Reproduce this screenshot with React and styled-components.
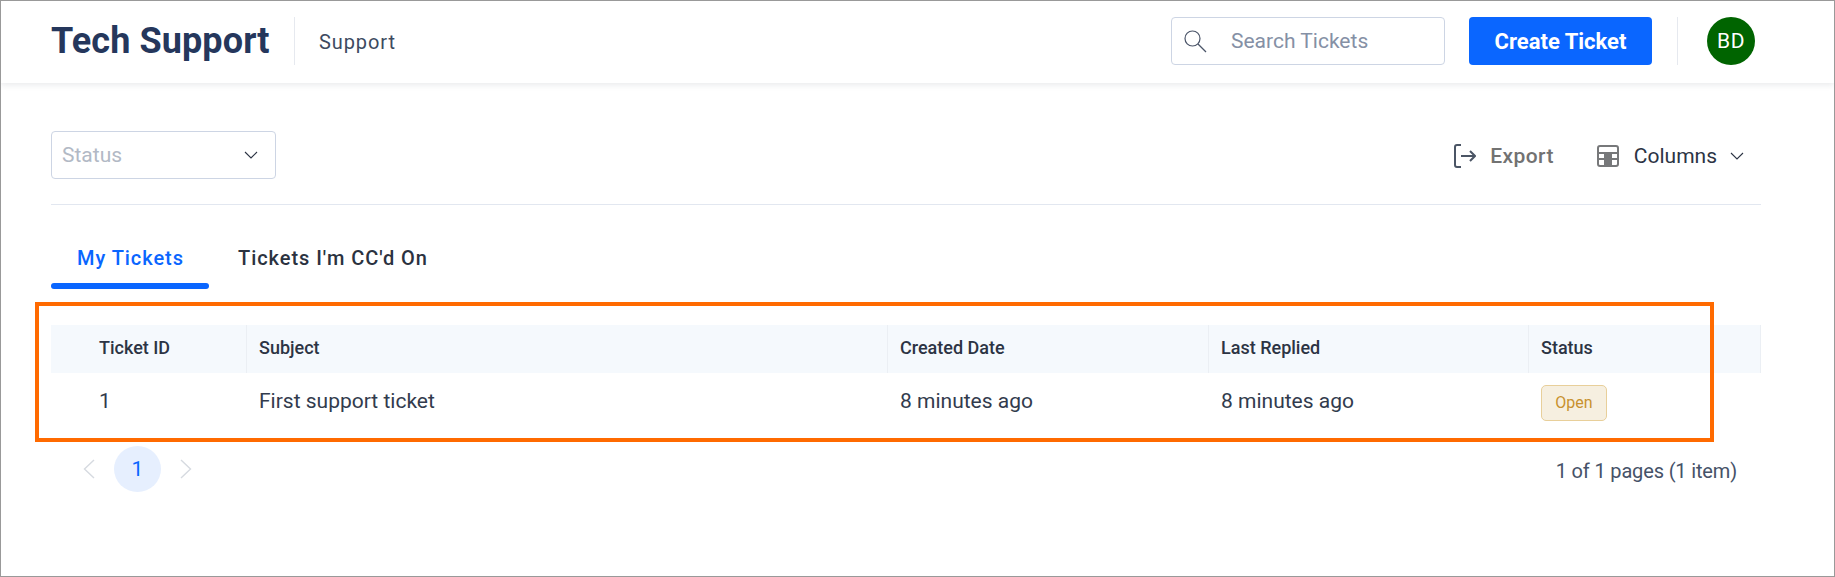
import { createGlobalStyle } from "styled-components";
import styled from "styled-components";

const GlobalStyle = createGlobalStyle`
    html, body {
        margin: 0;
        padding: 0;
        background: #fff;
    }
    * {
        box-sizing: border-box;
    }
`;

const columns = [
    { name: "Ticket ID", width: 196, first: true },
    { name: "Subject", width: 641 },
    { name: "Created Date", width: 321 },
    { name: "Last Replied", width: 320 },
    { name: "Status", width: 232 },
];

const SearchIcon = () => (
    <svg width="24" height="24" viewBox="0 0 24 24" fill="none" stroke="#4a5468" strokeWidth="1.2">
        <circle cx="9.5" cy="9.5" r="7.5" />
        <path d="M15 15l8 8" />
    </svg>
);

const ChevronDown = () => (
    <svg width="14" height="14" viewBox="0 0 14 14" fill="none" stroke="#2c3444" strokeWidth="1.1">
        <path d="M1 4l6 6 6-6" />
    </svg>
);

const PagerArrow = ({ dir }) => (
    <svg width="12" height="20" viewBox="0 0 12 20" fill="none" stroke="#d6dae0" strokeWidth="1.4">
        {dir === "left" ? <path d="M11 1L1.5 10 11 19" /> : <path d="M1 1l9.5 9L1 19" />}
    </svg>
);

const ExportIcon = () => (
    <svg width="22" height="24" viewBox="0 0 22 24" fill="none" stroke="#4b5565" strokeWidth="2">
        <path d="M7 1H3A2 2 0 0 0 1 3v18a2 2 0 0 0 2 2h4" />
        <path d="M7 12h14M16 7l5 5-5 5" />
    </svg>
);

const ColumnsIcon = () => (
    <svg width="22" height="22" viewBox="0 0 22 22">
        <rect x="1" y="1" width="20" height="20" rx="2" fill="#fff" stroke="#77787a" strokeWidth="2" />
        <rect x="1" y="7" width="20" height="2" fill="#77787a" />
        <rect x="7" y="7" width="8" height="14" fill="#77787a" />
        <rect x="1" y="13" width="20" height="2" fill="#77787a" />
    </svg>
);

const App = () => {
    return (
        <Page>
            <GlobalStyle />
            <Header>
                <Title>Tech Support</Title>
                <Crumb>Support</Crumb>
                <HeaderRight>
                    <SearchBox>
                        <SearchIcon />
                        <SearchText>Search Tickets</SearchText>
                    </SearchBox>
                    <CreateButton>Create Ticket</CreateButton>
                    <HeaderDivider />
                    <Avatar>BD</Avatar>
                </HeaderRight>
            </Header>
            <Content>
                <Toolbar>
                    <Select>
                        <span>Status</span>
                        <ChevronDown />
                    </Select>
                    <Actions>
                        <Action>
                            <ExportIcon />
                            <ExportLabel>Export</ExportLabel>
                        </Action>
                        <Action>
                            <ColumnsIcon />
                            <ColumnsLabel>Columns</ColumnsLabel>
                            <ChevronDown />
                        </Action>
                    </Actions>
                </Toolbar>
                <Tabs>
                    <Tab $active>My Tickets</Tab>
                    <Tab>Tickets I'm CC'd On</Tab>
                </Tabs>
                <Table>
                    <HeadRow>
                        {columns.map((c) => (
                            <HeadCell key={c.name} $width={c.width} $first={c.first}>
                                {c.name}
                            </HeadCell>
                        ))}
                    </HeadRow>
                    <BodyRow>
                        <BodyCell $width={196} $first>1</BodyCell>
                        <BodyCell $width={641}>First support ticket</BodyCell>
                        <BodyCell $width={321}>8 minutes ago</BodyCell>
                        <BodyCell $width={320}>8 minutes ago</BodyCell>
                        <BodyCell $width={232}>
                            <Badge>Open</Badge>
                        </BodyCell>
                    </BodyRow>
                </Table>
                <Footer>
                    <Pager>
                        <PagerArrow dir="left" />
                        <PageNumber>1</PageNumber>
                        <PagerArrow dir="right" />
                    </Pager>
                    <PageInfo>1 of 1 pages (1 item)</PageInfo>
                </Footer>
            </Content>
            <Highlight />
        </Page>
    );
};

const Page = styled.div`
    position: relative;
    width: 1835px;
    height: 577px;
    border: 1px solid #999;
    background: #fff;
    font-family: Roboto, sans-serif;
    overflow: hidden;
`;
const Header = styled.div`
    height: 82px;
    padding: 16px 79px 0 50px;
    display: flex;
    align-items: flex-start;
    box-shadow: 0 2px 6px rgba(40, 50, 70, 0.1);
`;
const Title = styled.div`
    width: 244px;
    height: 48px;
    line-height: 48px;
    font-size: 36px;
    font-weight: 700;
    letter-spacing: 0.1px;
    color: #25375c;
    border-right: 1px solid #e6e9ef;
`;
const Crumb = styled.div`
    margin-left: 24px;
    line-height: 50px;
    font-size: 20px;
    letter-spacing: 0.9px;
    color: #3d4a60;
`;
const HeaderRight = styled.div`
    margin-left: auto;
    display: flex;
    align-items: center;
`;
const SearchBox = styled.div`
    width: 274px;
    height: 48px;
    padding-left: 11px;
    display: flex;
    align-items: center;
    border: 1px solid #cdd5e4;
    border-radius: 4px;
`;
const SearchText = styled.span`
    margin-left: 24px;
    font-size: 21px;
    color: #8590a5;
`;
const CreateButton = styled.div`
    margin-left: 24px;
    width: 183px;
    height: 48px;
    display: flex;
    align-items: center;
    justify-content: center;
    background: #0a66ff;
    border-radius: 4px;
    color: #fff;
    font-size: 22px;
    font-weight: 700;
`;
const HeaderDivider = styled.div`
    margin-left: 25px;
    width: 1px;
    height: 48px;
    background: #e6e9ef;
`;
const Avatar = styled.div`
    margin-left: 29px;
    width: 48px;
    height: 48px;
    display: flex;
    align-items: center;
    justify-content: center;
    background: #006400;
    border-radius: 50%;
    color: #fff;
    font-size: 21px;
    letter-spacing: 0.5px;
`;
const Content = styled.div`
    padding: 48px 73px 0 50px;
`;
const Toolbar = styled.div`
    height: 74px;
    display: flex;
    align-items: flex-start;
    justify-content: space-between;
    border-bottom: 1px solid #e2e7f0;
`;
const Select = styled.div`
    width: 225px;
    height: 48px;
    padding: 0 17px 0 10px;
    display: flex;
    align-items: center;
    justify-content: space-between;
    border: 1px solid #cdd5e4;
    border-radius: 4px;
    font-size: 21px;
    color: #b2b9c5;
`;
const Actions = styled.div`
    height: 50px;
    padding-right: 17px;
    display: flex;
    align-items: center;
    gap: 43px;
`;
const Action = styled.div`
    display: flex;
    align-items: center;
    font-size: 21px;
`;
const ExportLabel = styled.span`
    margin-left: 14px;
    font-weight: 500;
    letter-spacing: 0.4px;
    color: #727272;
`;
const ColumnsLabel = styled.span`
    margin: 0 13px 0 15px;
    color: #2c3444;
`;
const Tabs = styled.div`
    height: 84px;
    display: flex;
    gap: 3px;
`;
const Tab = styled.div`
    position: relative;
    height: 84px;
    min-width: 158px;
    padding: 29px 20px 0 26px;
    line-height: 48px;
    font-size: 20px;
    font-weight: 500;
    letter-spacing: 0.95px;
    color: ${(p) => (p.$active ? "#0a66ff" : "#2b3240")};
    ${(p) =>
        p.$active &&
        `&::after {
            content: "";
            position: absolute;
            left: 0;
            right: 0;
            bottom: 0;
            height: 6px;
            border-radius: 3px;
            background: #0a66ff;
        }`}
`;
const Table = styled.div`
    margin-top: 36px;
`;
const HeadRow = styled.div`
    height: 48px;
    display: flex;
    background: #f5f9fd;
`;
const HeadCell = styled.div`
    width: ${(p) => p.$width}px;
    padding-left: ${(p) => (p.$first ? 48 : 12)}px;
    line-height: 46px;
    font-size: 18px;
    font-weight: 500;
    color: #2c3444;
    border-right: 1px solid #ebeff4;
`;
const BodyRow = styled.div`
    height: 57px;
    padding-bottom: 2px;
    display: flex;
    align-items: center;
`;
const BodyCell = styled.div`
    width: ${(p) => p.$width}px;
    padding-left: ${(p) => (p.$first ? 48 : 12)}px;
    font-size: 21px;
    color: #323b4d;
`;
const Badge = styled.span`
    display: inline-flex;
    align-items: center;
    justify-content: center;
    width: 66px;
    height: 36px;
    margin-top: 4px;
    background: #f6efe0;
    border: 1px solid #e8cf9a;
    border-radius: 5px;
    font-size: 16px;
    color: #c8912e;
`;
const Footer = styled.div`
    margin-top: 16px;
    padding: 0 24px 0 32px;
    display: flex;
    align-items: center;
    justify-content: space-between;
`;
const Pager = styled.div`
    display: flex;
    align-items: center;
    gap: 19px;
`;
const PageNumber = styled.div`
    width: 47px;
    height: 46px;
    display: flex;
    align-items: center;
    justify-content: center;
    border-radius: 50%;
    background: #e6effe;
    color: #0a66ff;
    font-size: 21px;
`;
const PageInfo = styled.div`
    margin-top: 4px;
    font-size: 20px;
    letter-spacing: -0.15px;
    color: #465268;
`;
const Highlight = styled.div`
    position: absolute;
    left: 34px;
    top: 301px;
    width: 1679px;
    height: 140px;
    border: 4px solid #ff6a00;
    pointer-events: none;
`;

export default App;
